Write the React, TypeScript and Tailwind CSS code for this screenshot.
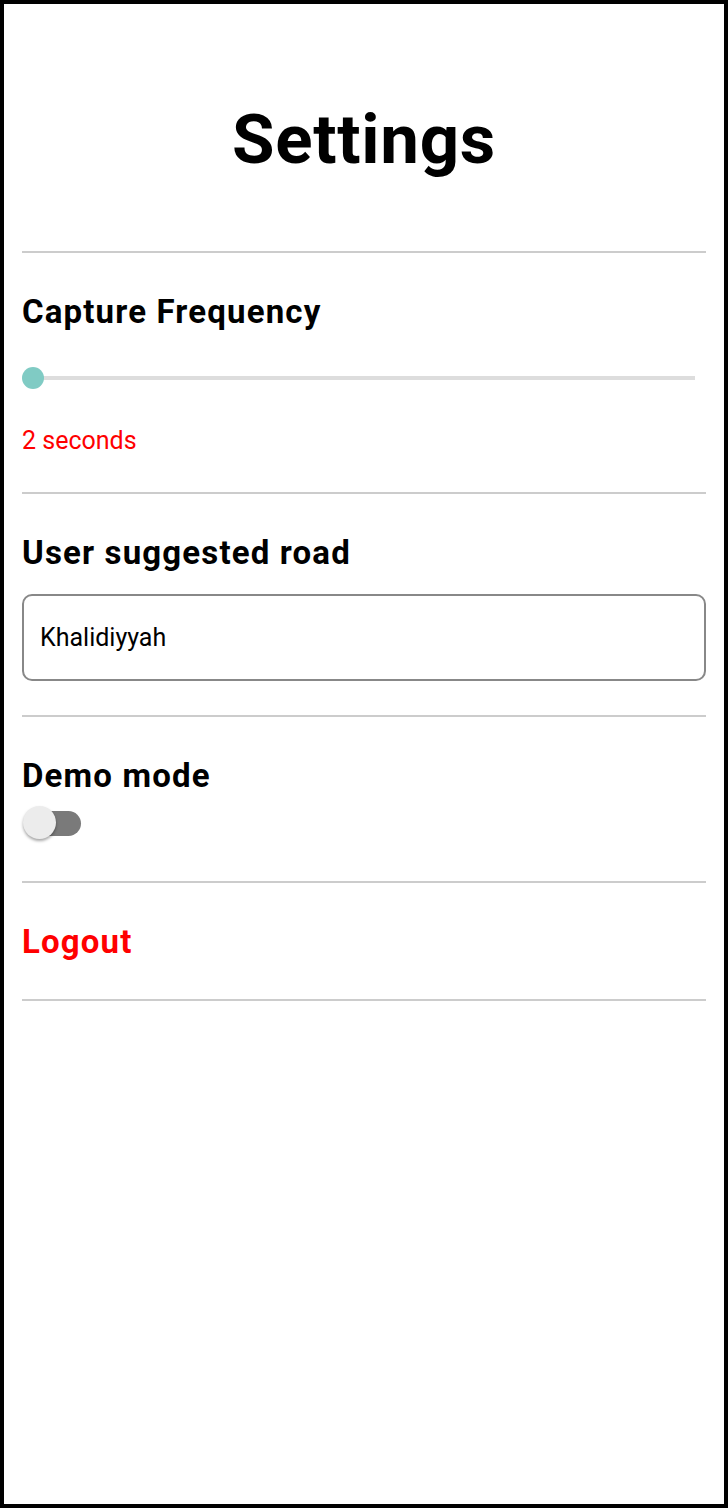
import { useState } from "react";

const Divider = () => <div className="h-[2px] w-full bg-[#cccccc]" />;

const App = () => {
  const [demo, setDemo] = useState(false);
  const [road, setRoad] = useState("Khalidiyyah");

  return (
    <div
      className="h-[1508px] w-[728px] border-4 border-black bg-white text-black"
      style={{ fontFamily: "Roboto, 'Liberation Sans', sans-serif" }}
    >
      <div className="px-[18px]">
        {/* Header */}
        <div className="flex h-[247px] items-center justify-center pt-[24px]">
          <h1 className="text-[69px] font-bold leading-none tracking-[0.01em]">Settings</h1>
        </div>

        <Divider />

        {/* Capture frequency */}
        <div className="pt-[39px] pb-[35px]">
          <h2 className="text-[33px] font-bold leading-[40px] tracking-[0.035em]">Capture Frequency</h2>
          <div className="relative mt-[35px] h-[22px]">
            <div className="absolute left-[11px] right-[11px] top-[9px] h-[4px] bg-[#dddddd]" />
            <div className="absolute left-0 top-0 h-[22px] w-[22px] rounded-full bg-[#80cbc4]" />
          </div>
          <p className="mt-[36px] text-[25px] leading-[32px] text-[#ff0000]">2 seconds</p>
        </div>

        <Divider />

        {/* Road */}
        <div className="pt-[39px] pb-[34px]">
          <h2 className="text-[33px] font-bold leading-[40px] tracking-[0.035em]">User suggested road</h2>
          <input
            value={road}
            onChange={(e) => setRoad(e.target.value)}
            className="mt-[21px] h-[87px] w-full rounded-[10px] border-2 border-[#888888] px-4 text-[25px] outline-none"
          />
        </div>

        <Divider />

        {/* Demo mode */}
        <div className="pt-[39px] pb-[41px]">
          <h2 className="text-[33px] font-bold leading-[40px] tracking-[0.035em]">Demo mode</h2>
          <button
            onClick={() => setDemo(!demo)}
            className="relative mt-[10px] block h-[34px] w-[60px]"
            aria-pressed={demo}
          >
            <span className="absolute left-[8px] top-[5px] h-[25px] w-[51px] rounded-full bg-[#7a7a7a]" />
            <span className="absolute left-[1px] top-0 h-[33px] w-[33px] rounded-full bg-[#ececec] shadow-[0_2px_3px_rgba(0,0,0,0.35)]" />
          </button>
        </div>

        <Divider />

        {/* Logout */}
        <div className="pt-[39px] pb-[37px]">
          <button className="block text-[33px] font-bold leading-[40px] tracking-[0.035em] text-[#ff0000]">Logout</button>
        </div>

        <Divider />
      </div>
    </div>
  );
};

export default App;
